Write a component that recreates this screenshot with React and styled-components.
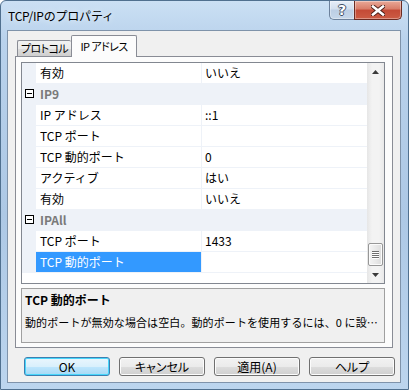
import React from 'react';
import styled, { createGlobalStyle } from 'styled-components';

const GlobalStyle = createGlobalStyle`
  html, body { margin: 0; padding: 0; background: #ffffff; }
  body { font-family: "Noto Sans CJK JP", "Noto Sans", sans-serif; }
`;

const LINE = '#eef2f8';

const Window = styled.div`
  width: 409px;
  height: 390px;
  box-sizing: border-box;
  border: 1px solid #50708f;
  border-radius: 6px 6px 0 0;
  background: linear-gradient(to bottom, #cbe0f4 0%, #b9d2ec 10%, #adc8e5 55%, #bcd5ee 100%);
  padding: 0 7px 6px 6px;
  display: flex;
  flex-direction: column;
`;

const TitleBar = styled.div`
  height: 29px;
  margin: 0 -7px 0 -6px;
  padding: 0 6px 0 7px;
  display: flex;
  align-items: center;
`;

const Title = styled.div`
  font-size: 12px;
  color: #000;
  letter-spacing: -0.2px;
  text-shadow: 0 0 6px rgba(255, 255, 255, 0.9);
`;

const CaptionGroup = styled.div`
  margin-left: auto;
  align-self: flex-start;
  display: flex;
`;

const CaptionButton = styled.div`
  width: ${p => p.$w}px;
  height: 19px;
  box-sizing: border-box;
  display: flex;
  align-items: center;
  justify-content: center;
  border: 1px solid ${p => (p.$close ? '#6b2b22' : '#6c819c')};
  border-top: none;
  border-radius: ${p => (p.$close ? '0 0 5px 0' : '0 0 0 5px')};
  ${p => (p.$close ? '' : 'border-right: none;')}
  background: ${p =>
    p.$close
      ? 'linear-gradient(to bottom, #e9a998 0%, #d87c68 45%, #c44a36 50%, #cc5c44 100%)'
      : 'linear-gradient(to bottom, #e6eef8 0%, #d2dfee 45%, #bccee4 50%, #c6d7ea 100%)'};
  box-shadow: inset 0 0 0 1px rgba(255, 255, 255, 0.35);
`;

const HelpGlyph = styled.span`
  font-family: "DejaVu Sans", sans-serif;
  font-weight: bold;
  font-size: 14px;
  line-height: 1;
  color: #fff;
  text-shadow: -1px 0 #3e4f66, 1px 0 #3e4f66, 0 -1px #3e4f66, 0 1px #3e4f66;
`;

const Client = styled.div`
  flex: 1;
  border: 1px solid #7f93aa;
  background: #f0f0f0;
  display: flex;
  flex-direction: column;
  padding-top: 4px;
`;

const TabRow = styled.div`
  display: flex;
  align-items: flex-end;
  margin-left: 9px;
  margin-bottom: -1px;
  position: relative;
  z-index: 1;
`;

const Tab = styled.div`
  box-sizing: border-box;
  height: ${p => (p.$active ? 22 : 16)}px;
  width: ${p => (p.$active ? 66 : 54)}px;
  margin-bottom: ${p => (p.$active ? 0 : 1)}px;
  border: 1px solid #898c95;
  border-bottom: none;
  border-radius: 2px 2px 0 0;
  background: ${p =>
    p.$active ? '#fcfcfc' : 'linear-gradient(to bottom, #f2f2f2 0%, #ebebeb 50%, #dddddd 51%, #cfcfcf 100%)'};
  font-size: 11px;
  font-feature-settings: "palt";
  letter-spacing: -0.6px;
  text-align: center;
  white-space: nowrap;
  line-height: ${p => (p.$active ? 20 : 15)}px;
  color: #000;
  ${p => (p.$active ? '' : 'border-right: none;')}
`;

const Panel = styled.div`
  margin-left: 7px;
  width: 378px;
  height: 292px;
  box-sizing: border-box;
  border: 1px solid #898c95;
  background: #fcfcfc;
  padding: 5px 7px 4px 5px;
  display: flex;
  flex-direction: column;
`;

const Grid = styled.div`
  height: 222px;
  box-sizing: border-box;
  border: 1px solid #828790;
  background: #fff;
  display: flex;
`;

const Rows = styled.div`
  flex: 1;
  display: flex;
  flex-direction: column;
`;

const Row = styled.div`
  display: flex;
  height: 21px;
  background: ${p => (p.$category ? LINE : '#fff')};
`;

const Gutter = styled.div`
  width: 14px;
  background: ${LINE};
  display: flex;
  justify-content: center;
  align-items: flex-start;
  padding-top: 5px;
  box-sizing: border-box;
`;

const MinusBox = styled.div`
  width: 9px;
  height: 9px;
  box-sizing: border-box;
  border: 1px solid #000;
  background: #fff;
  display: flex;
  align-items: center;
  justify-content: center;
  margin-left: 1px;
  &::after {
    content: '';
    width: 5px;
    height: 1px;
    background: #000;
  }
`;

const Name = styled.div`
  width: 165px;
  box-sizing: border-box;
  padding-left: 4px;
  font-size: 12px;
  line-height: 20px;
  white-space: nowrap;
  color: ${p => (p.$selected ? '#fff' : p.$category ? '#7a7a7a' : '#000')};
  font-weight: ${p => (p.$category ? 'bold' : 'normal')};
  background: ${p => (p.$selected ? '#3399ff' : 'transparent')};
  border-bottom: 1px solid ${LINE};
  ${p => (p.$category ? 'flex: 1;' : '')}
`;

const Value = styled.div`
  flex: 1;
  box-sizing: border-box;
  padding-left: 3px;
  border-left: 1px solid ${LINE};
  border-bottom: 1px solid ${LINE};
  font-size: 12px;
  line-height: 20px;
  color: #000;
`;

const ScrollBar = styled.div`
  width: 17px;
  display: flex;
  flex-direction: column;
  background: linear-gradient(to right, #e6e6e6 0%, #f3f3f3 30%, #f3f3f3 70%, #e9e9e9 100%);
`;

const ArrowButton = styled.div`
  height: 17px;
  display: flex;
  align-items: center;
  justify-content: center;
`;

const Thumb = styled.div`
  margin-top: auto;
  margin-left: 1px;
  width: 15px;
  height: 23px;
  box-sizing: border-box;
  border: 1px solid #979797;
  border-radius: 2px;
  background: linear-gradient(to right, #f4f4f4 0%, #e9e9e9 50%, #dcdcdc 100%);
  box-shadow: inset 0 0 0 1px #fbfbfb;
  display: flex;
  flex-direction: column;
  align-items: center;
  justify-content: center;
  gap: 1px;
`;

const Grip = styled.div`
  width: 7px;
  height: 1px;
  background: #6f6f6f;
  box-shadow: 0 1px 0 #ffffff;
`;

const Desc = styled.div`
  margin-top: 4px;
  height: 55px;
  box-sizing: border-box;
  border: 1px solid #a0a0a0;
  background: #f0f0f0;
  padding: 2px 2px 0 3px;
  font-size: 12px;
  color: #000;
`;

const DescTitle = styled.div`
  font-weight: bold;
  line-height: 18px;
`;

const DescText = styled.div`
  margin-top: 5px;
  font-size: 11px;
  line-height: 16px;
  letter-spacing: 0.1px;
  white-space: nowrap;
  overflow: hidden;
`;

const ButtonRow = styled.div`
  display: flex;
  gap: 9px;
  margin: 9px 0 0 16px;
`;

const Button = styled.div`
  width: 86px;
  height: 19px;
  box-sizing: border-box;
  border: 1px solid ${p => (p.$default ? '#3c7fb1' : '#707070')};
  border-radius: 3px;
  background: ${p =>
    p.$default
      ? 'linear-gradient(to bottom, #eaf6fd 0%, #d9f0fc 50%, #bee6fd 51%, #a7d9f5 100%)'
      : 'linear-gradient(to bottom, #f2f2f2 0%, #ebebeb 50%, #dddddd 51%, #cfcfcf 100%)'};
  box-shadow: inset 0 0 0 1px ${p => (p.$default ? '#48d6fb' : '#fcfcfc')};
  display: flex;
  align-items: center;
  justify-content: center;
  font-size: 12px;
  font-feature-settings: "palt";
  color: #000;
  line-height: 1;
`;

const rows = [
  { name: '有効', value: 'いいえ' },
  { name: 'IP9', category: true },
  { name: 'IP アドレス', value: '::1' },
  { name: 'TCP ポート', value: '' },
  { name: 'TCP 動的ポート', value: '0' },
  { name: 'アクティブ', value: 'はい' },
  { name: '有効', value: 'いいえ' },
  { name: 'IPAll', category: true },
  { name: 'TCP ポート', value: '1433' },
  { name: 'TCP 動的ポート', value: '', selected: true },
];

function Arrow({ up }) {
  return (
    <svg width="7" height="4" viewBox="0 0 7 4">
      <path d={up ? 'M0 4 L3.5 0 L7 4 Z' : 'M0 0 L3.5 4 L7 0 Z'} fill="#3b3b3b" />
    </svg>
  );
}

export default function App() {
  return (
    <>
      <GlobalStyle />
      <Window>
        <TitleBar>
          <Title>TCP/IPのプロパティ</Title>
          <CaptionGroup>
            <CaptionButton $w={25}>
              <HelpGlyph>?</HelpGlyph>
            </CaptionButton>
            <CaptionButton $w={48} $close>
              <svg width="14" height="11" viewBox="0 0 14 11">
                <path d="M2 1.5 L12 9.5 M12 1.5 L2 9.5" stroke="#4a1c15" strokeWidth="4.4" strokeLinecap="square" />
                <path d="M2 1.5 L12 9.5 M12 1.5 L2 9.5" stroke="#ffffff" strokeWidth="2.6" strokeLinecap="square" />
              </svg>
            </CaptionButton>
          </CaptionGroup>
        </TitleBar>
        <Client>
          <TabRow>
            <Tab>プロトコル</Tab>
            <Tab $active>IP アドレス</Tab>
          </TabRow>
          <Panel>
            <Grid>
              <Rows>
                {rows.map((r, i) =>
                  r.category ? (
                    <Row key={i} $category>
                      <Gutter>
                        <MinusBox />
                      </Gutter>
                      <Name $category>{r.name}</Name>
                    </Row>
                  ) : (
                    <Row key={i}>
                      <Gutter />
                      <Name $selected={r.selected}>{r.name}</Name>
                      <Value>{r.value}</Value>
                    </Row>
                  )
                )}
              </Rows>
              <ScrollBar>
                <ArrowButton>
                  <Arrow up />
                </ArrowButton>
                <Thumb>
                  <Grip />
                  <Grip />
                  <Grip />
                  <Grip />
                </Thumb>
                <ArrowButton>
                  <Arrow />
                </ArrowButton>
              </ScrollBar>
            </Grid>
            <Desc>
              <DescTitle>TCP 動的ポート</DescTitle>
              <DescText>動的ポートが無効な場合は空白。動的ポートを使用するには、0 に設…</DescText>
            </Desc>
          </Panel>
          <ButtonRow>
            <Button $default>OK</Button>
            <Button>キャンセル</Button>
            <Button>適用(A)</Button>
            <Button>ヘルプ</Button>
          </ButtonRow>
        </Client>
      </Window>
    </>
  );
}
